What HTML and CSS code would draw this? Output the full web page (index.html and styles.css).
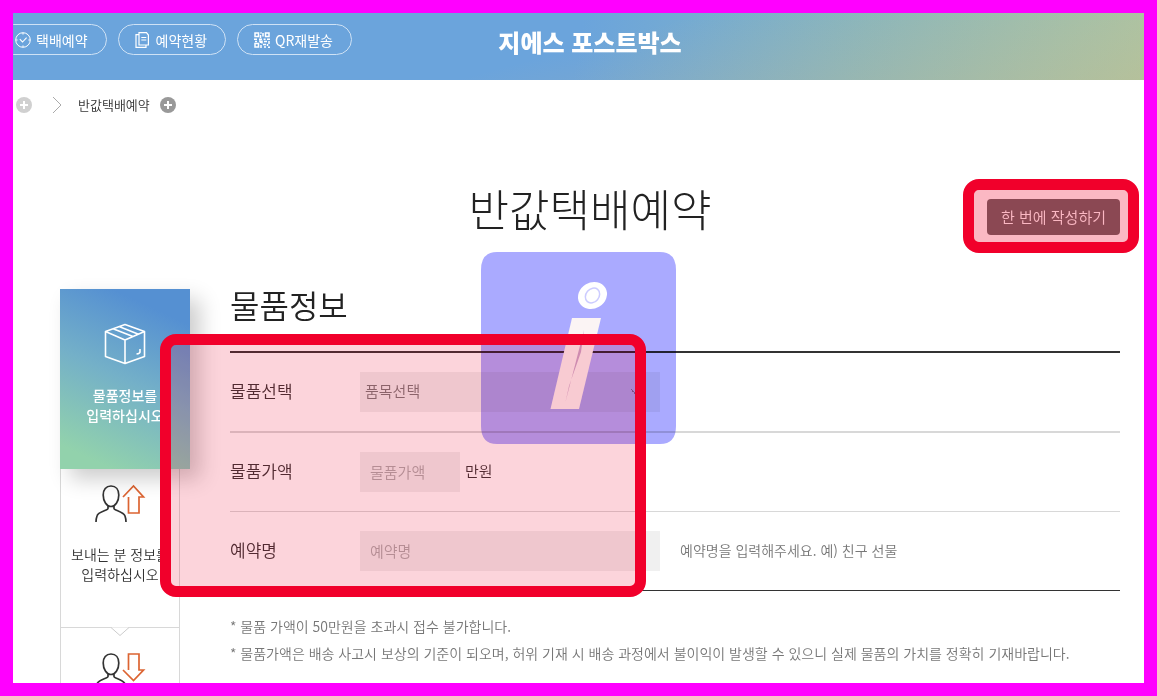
FILE: index.html
```html
<!DOCTYPE html>
<html lang="ko">
<head>
<meta charset="utf-8">
<meta name="viewport" content="width=device-width, initial-scale=1">
<title>반값택배예약</title>
<link rel="stylesheet" href="styles.css">
</head>
<body>
<div class="page">
  <header class="header">
    <nav class="nav">
      <a class="pill" href="#">
        <svg width="16" height="16" viewBox="0 0 16 16" fill="none" stroke="currentColor"><circle cx="8" cy="8" r="7.3"/><path d="M4.8 7.2 7.5 10 11.6 5.600M8 1v1.6M8 13.4V15M1 8h1.6M13.4 8H15" stroke-width="1.1"/></svg>
        택배예약
      </a>
      <a class="pill" href="#">
        <svg width="16" height="16" viewBox="0 0 16 16" fill="none" stroke="currentColor" stroke-width="1.2"><path d="M4 .7h7.500L13.400 3v10H4z"/><path d="M4 2.600H1v12.700h10V13M6.300 5.500h5M6.300 8h5"/></svg>
        예약현황
      </a>
      <a class="pill" href="#">
        <svg width="16" height="16" viewBox="0 0 16 16" fill="none" stroke="currentColor" stroke-width="1.5"><path d="M1 1h3.500v3.500H1zM11.500 1H15v3.500h-3.500zM1 11.500h3.500V15H1z"/><path d="M6.300 1h1.400M9 1v3.500M6.500 3v3M0 7.200h3M5 7.200h3M9.600 7.200h2M13 7.200h3M1 9.400h2M5 9h1.500v2M8 8.500v3M10 9.500h3M15 9v3M7 13v3M9 12.500h3M13.500 12v2M10 15h2M14 15.200h2"/></svg>
        QR재발송
      </a>
    </nav>
    <a class="logo" href="#">지에스 포스트박스</a>
  </header>

  <nav class="crumbs">
    <button class="plus plus-light" type="button" aria-label="상위 메뉴"><svg width="16" height="16" viewBox="0 0 16 16"><circle cx="8" cy="8" r="8" fill="currentColor"/><path d="M8 4v8M4 8h8" stroke="#fff" stroke-width="2"/></svg></button>
    <svg class="chevron" width="10" height="18" viewBox="0 0 10 18" fill="none" stroke="currentColor"><path d="M1 1l8 8-8 8"/></svg>
    <a href="#">반값택배예약</a>
    <button class="plus" type="button" aria-label="메뉴 열기"><svg width="16" height="16" viewBox="0 0 16 16"><circle cx="8" cy="8" r="8" fill="currentColor"/><path d="M8 4v8M4 8h8" stroke="#fff" stroke-width="2"/></svg></button>
  </nav>

  <main class="main">
    <div class="title-row">
      <h1>반값택배예약</h1>
      <div class="action">
        <button class="action-button" type="button">한 번에 작성하기</button>
        <div class="marker marker-action"></div>
      </div>
    </div>

    <div class="workspace">
      <ol class="steps">
        <li class="step step-active">
          <svg width="42" height="42" viewBox="0 0 42 42" fill="none" stroke="currentColor" stroke-width="1.6" stroke-linejoin="round"><path d="M21 1.500 40.500 8.500v25L21 40.500l-19.500-7v-25zM1.500 8.500 21 17l19.500-8.500M21 17v23.500M9 5.800 29 13.500M15 3.600 34.500 11.200M36 26v3q0 1.500-3.500 2"/></svg>
          <p>물품정보를<br>입력하십시오</p>
        </li>
        <li class="step">
          <svg width="52" height="40" viewBox="0 0 52 40" fill="none" stroke-width="1.7"><path stroke="#333" d="M17 2c5 0 7.800 3.600 7.800 9 0 6-3.300 11.500-7.800 11.500S9.200 17 9.200 11C9.200 5.600 12 2 17 2zM14 22v2.500c0 2-10 3-11 7.500-.7 2-1 4-1 6M20 22v2.500c0 2 9.500 3 11 7.500.7 2 1 4 1 6"/><path stroke="#dc6432" d="M34.500 13v16H45V13h4.500L39.500 2 29 13"/></svg>
          <p>보내는 분 정보를<br>입력하십시오</p>
        </li>
        <li class="step">
          <svg class="notch" width="18" height="10" viewBox="0 0 18 10" fill="#fff" stroke="#ccc"><path d="M0 .5 9 8.500 18 .5"/></svg>
          <svg width="52" height="40" viewBox="0 0 52 40" fill="none" stroke-width="1.7"><path stroke="#333" d="M17 2c5 0 7.800 3.600 7.800 9 0 6-3.300 11.500-7.800 11.500S9.200 17 9.200 11C9.200 5.600 12 2 17 2zM14 22v2.500c0 2-10 3-11 7.500-.7 2-1 4-1 6M20 22v2.500c0 2 9.500 3 11 7.500.7 2 1 4 1 6"/><path stroke="#dc6432" d="M34.500 18V2H45v16h4.500L39.500 28.500 29 18"/></svg>
        </li>
      </ol>

      <section class="section">
        <h2>물품정보</h2>
        <form class="form">
          <div class="row row-first">
            <label for="item">물품선택</label>
            <select id="item"><option>품목선택</option></select>
          </div>
          <div class="row">
            <label for="price">물품가액</label>
            <input id="price" class="short" type="text" placeholder="물품가액">
            <span class="unit">만원</span>
          </div>
          <div class="row row-last">
            <label for="name">예약명</label>
            <input id="name" type="text" placeholder="예약명">
            <span class="hint">예약명을 입력해주세요. 예) 친구 선물</span>
          </div>
          <svg class="badge" width="195" height="192" viewBox="0 0 195 192" aria-hidden="true"><path fill="#aaf" d="M16 0H179Q195 0 195 18V174Q195 192 179 192H16Q0 192 0 174V18Q0 0 16 0z"/></svg>
          <svg class="badge badge-letter" width="195" height="192" viewBox="0 0 195 192" aria-hidden="true"><ellipse cx="111.500" cy="43.500" rx="15" ry="13" fill="#fff" transform="rotate(-30 111.500 43.500)"/><ellipse cx="111.500" cy="43.500" rx="8" ry="6.500" fill="none" stroke="#ccf" stroke-width="1.500" transform="rotate(-50 111.500 43.500)"/><path fill="#fbf4f4" d="M91 66 69.500 157H98L120 66z"/><path fill="#c8a8cc" d="M103 78 84.500 150 88 134 100 100z"/></svg>
          <div class="marker marker-form"></div>
        </form>
        <ul class="notes">
          <li>* 물품 가액이 50만원을 초과시 접수 불가합니다.</li>
          <li>* 물품가액은 배송 사고시 보상의 기준이 되오며, 허위 기재 시 배송 과정에서 불이익이 발생할 수 있으니 실제 물품의 가치를 정확히 기재바랍니다.</li>
        </ul>
      </section>
    </div>
  </main>
</div>
</body>
</html>
```
FILE: styles.css
```css
* { box-sizing: border-box; }

body {
  margin: 0;
  padding: 13px;
  height: 100vh;
  overflow: hidden;
  background: #f0f;
  color: #333;
  font: 350 14px/20px "Noto Sans CJK KR", "Noto Sans", sans-serif;
}

a { color: inherit; text-decoration: none; }
button, input, select { font: inherit; border: 0; border-radius: 0; }
h1, h2, p, ul, ol { margin: 0; padding: 0; font-weight: 350; }
li { list-style: none; }

.page { height: 100%; overflow: hidden; background: #fff; }

.header {
  display: grid;
  grid-template-columns: 1fr auto 1fr;
  align-items: start;
  height: 67px;
  padding: 11px 24px 0 47px;
  background: linear-gradient(165deg, transparent 50%, rgba(210, 185, 130, .4)), linear-gradient(100deg, #6ba4dc 50%, #86b6c0 75%, #a2c6ac);
  color: #fff;
}
.nav { display: flex; gap: 11px; margin-left: -62px; white-space: nowrap; }
.pill {
  display: flex;
  align-items: center;
  gap: 5px;
  height: 31px;
  padding: 0 18px 0 16px;
  border: 1px solid #cfe2f5;
  border-radius: 16px;
  font-weight: 400;
}
.logo { font-size: 24px; line-height: 36px; font-weight: 900; white-space: nowrap; }

.crumbs { display: flex; align-items: center; height: 50px; padding-left: 3px; font-size: 13px; }
.crumbs a { margin-right: 10px; }
.plus { display: flex; padding: 0; background: none; color: #999; }
.plus-light { color: #d0d0d0; }
.chevron { margin: 0 16px 0 20px; color: #aaa; }

.main { padding: 50px 24px 0 47px; }
.title-row { display: grid; grid-template-columns: 1fr auto 1fr; align-items: start; margin-bottom: 53px; }
.title-row h1 { grid-column: 2; color: #222; font-size: 44px; line-height: 56px; font-weight: 300; }
.action { position: relative; justify-self: end; margin-top: 19px; }
.action-button { height: 36px; padding: 0 14px; border-radius: 4px; background: #646464; color: #fff; font-size: 15px; }

.marker { position: absolute; border: 11px solid #f1002b; border-radius: 16px; background: rgba(240, 0, 40, .17); background-clip: padding-box; pointer-events: none; }
.marker-action { inset: -20px -19px -18px -24px; background-color: rgba(240, 0, 40, .28); }
.marker-form { z-index: 2; top: -19px; bottom: -6px; left: -70px; width: 486px; }

.workspace { display: grid; grid-template-columns: 130px minmax(0, 1fr); gap: 40px; }
.step { position: relative; width: 120px; height: 159px; padding: 15px 0 0; border: 1px solid #d8d8d8; border-top: 0; text-align: center; }
.step + .step + .step { padding-top: 24px; border-top: 1px solid #d8d8d8; margin-top: -1px; }
.step svg { display: block; margin: 0 auto; }
.step p { margin-top: 20px; white-space: nowrap; }
.step-active {
  z-index: 1;
  width: 130px;
  height: 180px;
  padding-top: 34px;
  border: 0;
  background: linear-gradient(25deg, #92d2ac 10%, #74b0c8 50%, #5590d2 85%);
  box-shadow: 10px 10px 20px rgba(0, 0, 0, .2);
  color: #fff;
}
.step-active p { font-weight: 500; }
.step .notch { position: absolute; top: -1px; left: 50px; }

.section h2 { margin-bottom: 32px; color: #222; font-size: 32px; line-height: 30px; }
.form { position: relative; border-top: 2px solid #333; }
.row { display: flex; align-items: center; padding: 19px 0; border-bottom: 1px solid #d8d8d8; }
.row-first { border-bottom-width: 2px; }
.row-last { border-color: #333; }
.row label { width: 130px; padding-bottom: 2px; font-size: 17px; }
.row input, .row select { width: 300px; height: 40px; padding: 0 10px 2px; background: #f0f0f0; color: #777; font-size: 15px; }
.row select {
  padding: 0 5px 2px;
  appearance: none;
  background: linear-gradient(45deg, transparent 50%, #999 50%, #999 65%, transparent 65%) right 24px center / 6px 6px no-repeat #f0f0f0;
}
.row input.short { width: 100px; }
.row input::placeholder { color: #aaa; opacity: 1; }
.unit { margin-left: 5px; padding-bottom: 2px; font-size: 15px; }
.hint { margin-left: 20px; padding-bottom: 2px; color: #777; }
.badge { position: absolute; top: -101px; left: 251px; mix-blend-mode: multiply; }
.badge-letter { mix-blend-mode: normal; }

.notes { padding-top: 22px; color: #777; line-height: 27px; }
```
